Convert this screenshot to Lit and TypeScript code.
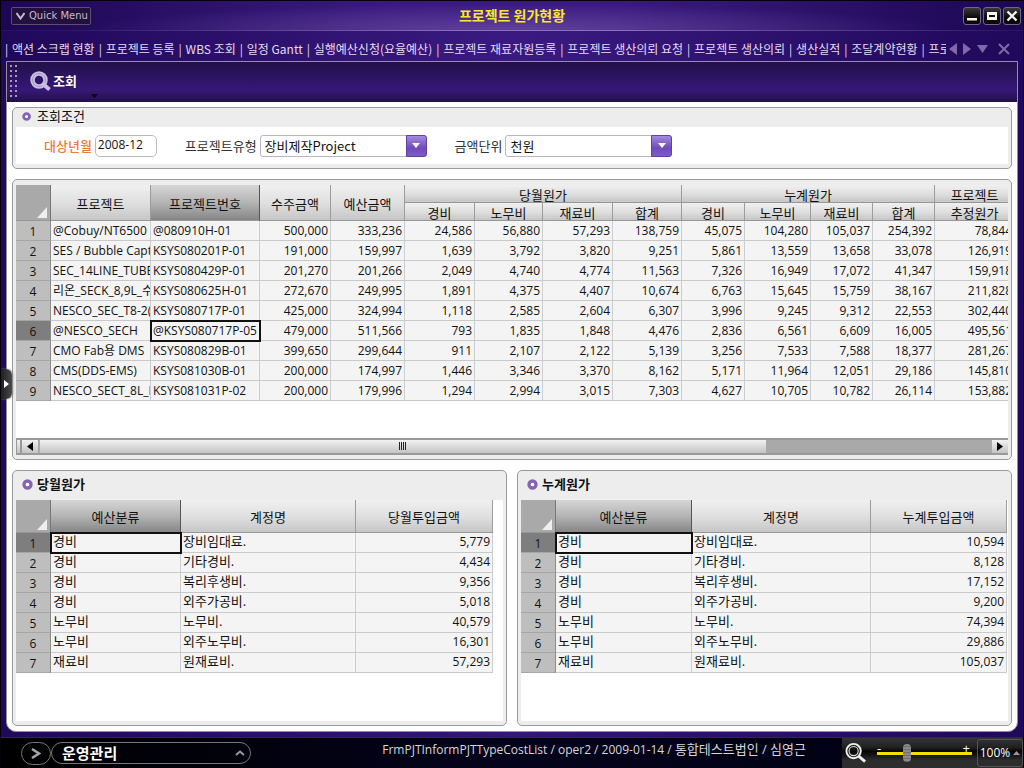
import { LitElement, html, css, svg } from "lit";
import { customElement, property } from "lit/decorators.js";
import { classMap } from "lit/directives/class-map.js";
import { styleMap } from "lit/directives/style-map.js";

interface HeadCell {
  text: string;
  rows?: number;
  cols?: number;
  active?: boolean;
}

interface GridData {
  label: string;
  widths: number[];
  head: HeadCell[][];
  rows: string[][];
  textCols: number;
  selected: [number, number];
}

const projectGrid: GridData = {
  label: "프로젝트 원가현황",
  widths: [35, 100, 109, 71, 74, 70, 68, 70, 69, 63, 66, 62, 62, 80],
  head: [
    [
      { text: "프로젝트", rows: 2 },
      { text: "프로젝트번호", rows: 2, active: true },
      { text: "수주금액", rows: 2 },
      { text: "예산금액", rows: 2 },
      { text: "당월원가", cols: 4 },
      { text: "누계원가", cols: 4 },
      { text: "프로젝트" },
    ],
    [
      { text: "경비" },
      { text: "노무비" },
      { text: "재료비" },
      { text: "합계" },
      { text: "경비" },
      { text: "노무비" },
      { text: "재료비" },
      { text: "합계" },
      { text: "추정원가" },
    ],
  ],
  textCols: 2,
  selected: [5, 1],
  rows: [
    ["@Cobuy/NT6500", "@080910H-01", "500,000", "333,236", "24,586", "56,880", "57,293", "138,759", "45,075", "104,280", "105,037", "254,392", "78,844"],
    ["SES / Bubble Capt", "KSYS080201P-01", "191,000", "159,997", "1,639", "3,792", "3,820", "9,251", "5,861", "13,559", "13,658", "33,078", "126,919"],
    ["SEC_14LINE_TUBE", "KSYS080429P-01", "201,270", "201,266", "2,049", "4,740", "4,774", "11,563", "7,326", "16,949", "17,072", "41,347", "159,918"],
    ["리온_SECK_8,9L_수", "KSYS080625H-01", "272,670", "249,995", "1,891", "4,375", "4,407", "10,674", "6,763", "15,645", "15,759", "38,167", "211,828"],
    ["NESCO_SEC_T8-2(", "KSYS080717P-01", "425,000", "324,994", "1,118", "2,585", "2,604", "6,307", "3,996", "9,245", "9,312", "22,553", "302,440"],
    ["@NESCO_SECH", "@KSYS080717P-05", "479,000", "511,566", "793", "1,835", "1,848", "4,476", "2,836", "6,561", "6,609", "16,005", "495,561"],
    ["CMO Fab용 DMS", "KSYS080829B-01", "399,650", "299,644", "911", "2,107", "2,122", "5,139", "3,256", "7,533", "7,588", "18,377", "281,267"],
    ["CMS(DDS-EMS)", "KSYS081030B-01", "200,000", "174,997", "1,446", "3,346", "3,370", "8,162", "5,171", "11,964", "12,051", "29,186", "145,810"],
    ["NESCO_SECT_8L_D", "KSYS081031P-02", "200,000", "179,996", "1,294", "2,994", "3,015", "7,303", "4,627", "10,705", "10,782", "26,114", "153,882"],
  ],
};

const accounts = [
  ["경비", "장비임대료."],
  ["경비", "기타경비."],
  ["경비", "복리후생비."],
  ["경비", "외주가공비."],
  ["노무비", "노무비."],
  ["노무비", "외주노무비."],
  ["재료비", "원재료비."],
];

const costGrid = (label: string, amountHead: string, widths: number[], amounts: string[]): GridData => ({
  label,
  widths,
  head: [[{ text: "예산분류", active: true }, { text: "계정명" }, { text: amountHead }]],
  textCols: 2,
  selected: [0, 0],
  rows: accounts.map((a, i) => [...a, amounts[i]]),
});

const monthGrid = costGrid("당월원가", "당월투입금액", [35, 130, 175, 137],
  ["5,779", "4,434", "9,356", "5,018", "40,579", "16,301", "57,293"]);
const totalGrid = costGrid("누계원가", "누계투입금액", [35, 136, 179, 136],
  ["10,594", "8,128", "17,152", "9,200", "74,394", "29,886", "105,037"]);

const tabs = [
  "액션 스크랩 현황", "프로젝트 등록", "WBS 조회", "일정 Gantt", "실행예산신청(요율예산)",
  "프로젝트 재료자원등록", "프로젝트 생산의뢰 요청", "프로젝트 생산의뢰", "생산실적",
  "조달계약현황", "프로젝트 원가현황",
];

@customElement("data-grid")
export class DataGrid extends LitElement {
  @property({ attribute: false }) data!: GridData;

  static styles = css`
    :host { display: block; overflow: hidden; }
    table {
      table-layout: fixed;
      border-collapse: separate;
      border-spacing: 0;
      color: #111;
    }
    th, td {
      box-sizing: border-box;
      padding: 0 2px;
      overflow: hidden;
      white-space: nowrap;
      font-weight: 400;
    }
    thead th {
      height: 33px;
      padding-top: 3px;
      font-size: 13px;
      line-height: 14px;
      text-align: center;
      background: linear-gradient(#f0f0f0, #dedede 55%, #c6c6c6);
      border-right: 1px solid #9c9c9c;
      border-bottom: 1px solid #979797;
    }
    .double th { height: 18px; }
    thead th.active {
      background: linear-gradient(#d6d6d6, #b4b4b4 50%, #868686);
      border-right-color: #555;
    }
    thead th.corner {
      padding: 0 3px 2px 0;
      vertical-align: bottom;
      text-align: right;
      background: #a9a9a9;
      border-right-color: #777;
    }
    .corner svg { display: inline-block; width: 10px; height: 11px; vertical-align: bottom; }
    tbody th {
      height: 20px;
      padding-top: 3px;
      font-size: 12px;
      line-height: 16px;
      background: #bebebe;
      border-right: 1px solid #8c8c8c;
      border-bottom: 1px solid #a6a6a6;
    }
    tbody th.current { background: #7e7e7e; }
    td {
      height: 20px;
      font-size: 12px;
      line-height: 18px;
      text-align: right;
      background: #f4f4f4;
      border-right: 1px solid #c9ced3;
      border-bottom: 1px solid #c9c9c9;
    }
    td.text { text-align: left; }
    td.korean { padding-bottom: 2px; font-size: 13px; line-height: 17px; }
    td.selected { outline: 2px solid #111; outline-offset: -1px; }
  `;

  render() {
    const d = this.data;
    const total = d.widths.reduce((a, b) => a + b, 0);
    return html`
      <table aria-label=${d.label} style=${styleMap({ width: `${total}px` })}>
        <colgroup>
          ${d.widths.map((w) => html`<col style=${styleMap({ width: `${w}px` })} />`)}
        </colgroup>
        <thead class=${classMap({ double: d.head.length > 1 })}>
          ${d.head.map((row, i) => html`<tr>
            ${i === 0
              ? html`<th class="corner" rowspan=${d.head.length}>
                  <svg viewBox="0 0 10 11" aria-hidden="true"><path d="M10 0v11H0z" fill="#efefef" /></svg>
                </th>`
              : ""}
            ${row.map((c) => html`<th
              class=${classMap({ active: !!c.active })}
              rowspan=${c.rows ?? 1}
              colspan=${c.cols ?? 1}
            >${c.text}</th>`)}
          </tr>`)}
        </thead>
        <tbody>
          ${d.rows.map((row, r) => html`<tr>
            <th scope="row" class=${classMap({ current: d.selected[0] === r })}>${r + 1}</th>
            ${row.map((v, c) => html`<td class=${classMap({
              text: c < d.textCols,
              korean: /^[가-힣]+\.?$/.test(v),
              selected: d.selected[0] === r && d.selected[1] === c,
            })}>${v}</td>`)}
          </tr>`)}
        </tbody>
      </table>
    `;
  }
}

const ring = svg`<circle cx="5" cy="5" r="3.2" fill="#fff" stroke="#8563b4" stroke-width="3" />`;

@customElement("app-root")
export class AppRoot extends LitElement {
  static styles = css`
    :host {
      position: relative;
      display: flex;
      flex-direction: column;
      box-sizing: border-box;
      height: 100vh;
      min-height: 640px;
      overflow: hidden;
      border: 1px solid #05020c;
      border-bottom: 0;
      background: linear-gradient(90deg, #20085a, #331675 50%, #20085a);
      color: #111;
      font-family: "Open Sans", "Noto Sans CJK KR", sans-serif;
      font-size: 13px;
      line-height: 18px;
    }
    * { box-sizing: border-box; }
    button, input, select { font: inherit; color: inherit; margin: 0; }
    button { padding: 0; border: 0; background: none; cursor: pointer; }
    a { color: inherit; text-decoration: none; }
    svg { display: block; flex: none; }
    h1, h2 { margin: 0; font-weight: 700; }

    .titlebar {
      display: grid;
      grid-template-columns: 1fr auto 1fr;
      align-items: center;
      flex: none;
      height: 30px;
      padding: 0 2px;
      border-bottom: 1px solid #6b5299;
      border-image: linear-gradient(90deg, #2b1266 5%, #8a72b2 45%, #8a72b2 60%, #2b1266) 1;
      background:
        radial-gradient(ellipse 42% 90% at 50% 100%, rgba(120, 90, 170, .6), transparent),
        linear-gradient(90deg, #1d0753, #3a1a80 38%, #3a1a80 60%, #1d0753);
    }
    .quick {
      display: flex;
      align-items: center;
      gap: 4px;
      height: 18px;
      width: 80px;
      margin-left: 8px;
      padding-left: 4px;
      justify-self: start;
      border: 1px solid #5c5070;
      border-radius: 2px;
      background: #24103f;
      color: #c2bccd;
      font-family: "DejaVu Sans", sans-serif;
      font-size: 10px;
      white-space: nowrap;
    }
    .title { color: #fbe72c; font-size: 14px; line-height: 20px; padding-bottom: 2px; font-family: "Noto Sans CJK KR", sans-serif; }
    .winbtns { display: flex; gap: 2px; justify-self: end; }
    .winbtns button {
      display: grid;
      place-items: center;
      width: 18px;
      height: 18px;
      border: 1px solid #6d6780;
      border-radius: 3px;
      background: linear-gradient(#3a3a3a, #0a0a0a 60%);
    }

    .tabbar {
      display: flex;
      align-items: center;
      flex: none;
      height: 30px;
      padding: 6px 13px 0 4px;
      color: #e4dcf2;
      background: linear-gradient(90deg, #20085a, #3a1a80 50%, #20085a);
    }
    .tabs {
      display: flex;
      flex: 1;
      min-width: 0;
      overflow: hidden;
      font-family: "Noto Sans CJK KR", sans-serif;
      font-size: 12px;
      white-space: nowrap;
    }
    .tabs a::before { content: "|"; display: inline-block; width: 7px; }
    .tabs a { flex: none; padding-right: 4px; }
    .tabnav { display: flex; align-items: center; gap: 6px; padding-left: 3px; }
    .tabnav .x { margin-left: 4px; }

    .frame {
      display: flex;
      flex-direction: column;
      flex: 1;
      min-height: 0;
      margin: 0 5px 5px;
      border: 1px solid #98918c;
      border-radius: 0 0 10px 10px;
      background: #fff;
      overflow: hidden;
    }
    .toolbar {
      display: flex;
      align-items: center;
      flex: none;
      height: 40px;
      padding: 0 3px 2px;
      background: linear-gradient(#231048, #341672 62%, #371876 70%, #22104a);
      color: #fff;
    }
    .grip {
      width: 8px;
      height: 32px;
      background: radial-gradient(circle at 1px 1px, #a79cc0 1px, transparent 1px) 0 0 / 5px 5px;
    }
    .search { display: flex; align-items: center; gap: 2px; margin-left: 12px; font-weight: 700; }
    .caret { align-self: flex-end; margin: 0 0 2px 14px; }

    .content {
      display: grid;
      grid-template-rows: auto minmax(0, 280fr) minmax(0, 256fr);
      flex: 1;
      gap: 10px;
      min-height: 0;
      padding: 5px;
    }
    .panel {
      display: flex;
      flex-direction: column;
      min-width: 0;
      min-height: 0;
      padding: 0 3px 4px;
      border: 1px solid #9a9a9a;
      border-radius: 5px;
      background: #ededed;
    }
    .head { display: flex; align-items: center; gap: 4px; flex: none; height: 29px; padding: 0 0 2px 6px; }
    .head h2 { font-size: 13px; }
    .cond .head { height: 19px; padding-bottom: 3px; }
    .cond h2 { font-weight: 400; }
    .fields { display: flex; align-items: center; height: 37px; padding-left: 28px; background: #fff; }
    .fields label { color: #333; white-space: nowrap; margin-right: 3px; }
    .fields label.must { color: #ee7a31; font-weight: 500; font-family: "Noto Sans CJK KR", sans-serif; }
    .fields input {
      width: 62px;
      height: 22px;
      margin-right: 28px;
      padding: 0 2px 2px;
      border: 1px solid #bbb;
      border-radius: 5px;
      background: #fff;
      font-size: 12px;
    }
    .combo { display: grid; width: 167px; margin-right: 28px; }
    .combo select, .combo .drop { grid-area: 1 / 1; }
    .combo select {
      appearance: none;
      height: 22px;
      padding: 1px 24px 0 4px;
      border: 1px solid #b9b5c4;
      border-radius: 3px;
      background: #fff;
      font-family: "Noto Sans CJK KR", sans-serif;
    }
    .drop {
      display: grid;
      place-items: center;
      justify-self: end;
      width: 21px;
      height: 22px;
      border: 1px solid #5e41a0;
      border-radius: 0 3px 3px 0;
      background: linear-gradient(#a48ae0, #6f4bba 60%, #7d5cc6);
      pointer-events: none;
    }

    .main { padding-top: 5px; }
    .sheet { flex: 1; min-height: 0; background: #fff; }
    .pair { display: grid; grid-template-columns: minmax(0, 1fr) minmax(0, 1fr); gap: 10px; min-height: 0; }

    .scroll {
      display: flex;
      flex: none;
      height: 17px;
      border: solid #9a9a9a;
      border-width: 2px 0;
      background: #a9a9a9;
    }
    .scroll button, .thumb { display: grid; place-items: center; background: linear-gradient(#f2f2f2, #c4c4c4); }
    .scroll button { width: 16px; }
    .scroll .split { width: 6px; border-right: 2px solid #999; border-left: 1px solid #999; }
    .thumb { flex: 726 1 0; border-left: 2px solid #aaa; }
    .track { flex: 226 1 0; }

    .status {
      display: flex;
      align-items: stretch;
      flex: none;
      height: 31px;
      border-top: 1px solid #33264d;
      background: linear-gradient(90deg, #000, #04031c 50%, #000010);
      color: #d6d6dc;
    }
    .go {
      display: grid;
      place-items: center;
      align-self: center;
      flex: none;
      width: 30px;
      height: 23px;
      margin-left: 20px;
      border: 1px solid #777;
      border-radius: 12px;
    }
    .module {
      display: flex;
      align-items: center;
      justify-content: space-between;
      align-self: center;
      flex: none;
      width: 200px;
      height: 22px;
      padding: 0 5px 0 10px;
      border: 1px solid #777;
      border-radius: 11px;
      color: #fff;
      font-size: 15px;
      font-weight: 700;
    }
    .path { flex: 1; min-width: 0; padding: 2px 36px 0 0; text-align: right; font-size: 12px; white-space: nowrap; }
    .who { font-size: 13px; }
    .zoom {
      display: flex;
      align-items: center;
      flex: none;
      width: 181px;
      padding-left: 3px;
      background: linear-gradient(#343434, #222 30%, #060606 45%, #2d2d2d 75%);
    }
    .range { display: grid; flex: none; width: 95px; margin: 0 5px 0 10px; }
    .signs, .range input { grid-area: 1 / 1; }
    .signs { display: flex; justify-content: space-between; height: 22px; line-height: 12px; color: #fff; padding-right: 2px; }
    .range input { appearance: none; width: 95px; height: 22px; background: transparent; }
    .range input::-webkit-slider-runnable-track { height: 3px; background: #f6dc00; }
    .range input::-webkit-slider-thumb {
      appearance: none;
      width: 8px;
      height: 18px;
      margin-top: -8px;
      border-radius: 4px;
      background: repeating-linear-gradient(#8b8b8b 0 2px, #6f6f6f 2px 3px);
    }
    .pct {
      display: flex;
      align-items: center;
      justify-content: center;
      gap: 3px;
      flex: 1;
      height: 28px;
      border: 1px solid #555;
      border-radius: 3px;
      color: #fff;
      font-size: 12px;
    }

    /* Drawer handle floats over the frame's left edge. */
    .drawer {
      position: absolute;
      left: -1px;
      top: calc(50% - 16px);
      display: grid;
      place-items: center;
      width: 12px;
      height: 30px;
      border-radius: 0 6px 6px 0;
      background: linear-gradient(90deg, #1b1b1b, #4a4a4a);
      box-shadow: 1px 0 2px #888;
    }
  `;

  private panel(d: GridData) {
    return html`<section class="panel">
      <div class="head">
        <svg width="11" height="11" viewBox="0 0 10 10" aria-hidden="true">${ring}</svg>
        <h2>${d.label}</h2>
      </div>
      <data-grid class="sheet" .data=${d}></data-grid>
    </section>`;
  }

  private drop() {
    return html`<span class="drop" aria-hidden="true">
      <svg width="8" height="5" viewBox="0 0 8 5"><path d="M0 0h8L4 5z" fill="#fff" /></svg>
    </span>`;
  }

  render() {
    return html`
      <header class="titlebar">
        <button class="quick">
          <svg width="9" height="8" viewBox="0 0 9 8"><path d="M0.500 1l4 5.500L8.500 1" fill="none" stroke="#c2bccd" stroke-width="2" /></svg>
          Quick Menu
        </button>
        <h1 class="title">프로젝트 원가현황</h1>
        <div class="winbtns">
          <button aria-label="최소화"><svg width="12" height="12" viewBox="0 0 12 12"><path d="M1 8h10v2.500H1z" fill="#f5f5ea" /></svg></button>
          <button aria-label="최대화"><svg width="12" height="12" viewBox="0 0 12 12"><path d="M1 2h10v8H1z M3 5v2h6V5z" fill="#f5f5ea" fill-rule="evenodd" /></svg></button>
          <button aria-label="닫기"><svg width="12" height="12" viewBox="0 0 12 12"><path d="M1.500 1.500l9 9M10.500 1.500l-9 9" stroke="#f5f5ea" stroke-width="2.400" /></svg></button>
        </div>
      </header>

      <nav class="tabbar">
        <div class="tabs">${tabs.map((t) => html`<a href="#">${t}</a>`)}</div>
        <div class="tabnav">
          <button aria-label="이전"><svg width="8" height="12" viewBox="0 0 9 12" preserveAspectRatio="none"><path d="M9 0v12L0 6z" fill="#7f69a8" /></svg></button>
          <button aria-label="다음"><svg width="8" height="12" viewBox="0 0 9 12" preserveAspectRatio="none"><path d="M0 0v12l9-6z" fill="#7f69a8" /></svg></button>
          <button aria-label="목록"><svg width="11" height="8" viewBox="0 0 12 9" preserveAspectRatio="none"><path d="M0 0h12L6 9z" fill="#7f69a8" /></svg></button>
          <button class="x" aria-label="탭 닫기"><svg width="12" height="12" viewBox="0 0 12 12"><path d="M1 1l10 10M11 1L1 11" stroke="#7f69a8" stroke-width="2" /></svg></button>
        </div>
      </nav>

      <main class="frame">
        <div class="toolbar">
          <span class="grip"></span>
          <button class="search">
            <svg width="21" height="20" viewBox="0 0 21 20">
              <circle cx="9" cy="9" r="6.500" fill="none" stroke="#c9bfe0" stroke-width="4.500" />
              <circle cx="9" cy="9" r="6.500" fill="none" stroke="#a294c8" stroke-width="1" />
              <path d="M13 13l6.500 5.500" stroke="#c9bfe0" stroke-width="4" />
            </svg>
            조회
          </button>
          <svg class="caret" width="7" height="4" viewBox="0 0 7 4" aria-hidden="true"><path d="M0 0h7L3.500 4z" fill="#0b0418" /></svg>
        </div>

        <div class="content">
          <section class="panel cond">
            <div class="head">
              <svg width="11" height="11" viewBox="0 0 12 12" aria-hidden="true"><g transform="translate(0 1)">${ring}</g></svg>
              <h2>조회조건</h2>
            </div>
            <form class="fields">
              <label class="must" for="month">대상년월</label>
              <input id="month" type="text" value="2008-12" />
              <label for="kind">프로젝트유형</label>
              <span class="combo">
                <select id="kind"><option>장비제작Project</option></select>
                ${this.drop()}
              </span>
              <label for="unit">금액단위</label>
              <span class="combo">
                <select id="unit"><option>천원</option></select>
                ${this.drop()}
              </span>
            </form>
          </section>

          <section class="panel main">
            <data-grid class="sheet" .data=${projectGrid}></data-grid>
            <div class="scroll">
              <button class="split" aria-label="분할"></button>
              <button aria-label="왼쪽"><svg width="6" height="9" viewBox="0 0 6 9"><path d="M6 0v9L0 4.500z" fill="#000" /></svg></button>
              <div class="thumb"><svg width="8" height="8" viewBox="0 0 8 8" aria-hidden="true"><path d="M.5 0v8M2.500 0v8M4.500 0v8M6.500 0v8" stroke="#222" /></svg></div>
              <div class="track"></div>
              <button aria-label="오른쪽"><svg width="6" height="9" viewBox="0 0 6 9"><path d="M0 0v9l6-4.500z" fill="#000" /></svg></button>
            </div>
          </section>

          <div class="pair">${this.panel(monthGrid)}${this.panel(totalGrid)}</div>
        </div>
      </main>

      <footer class="status">
        <button class="go" aria-label="이동"><svg width="10" height="11" viewBox="0 0 10 11"><path d="M1 1l7 4.500L1 10" fill="none" stroke="#a5a5a5" stroke-width="2.500" /></svg></button>
        <button class="module">
          운영관리
          <svg width="10" height="6" viewBox="0 0 10 6"><path d="M1 5l4-3.500L9 5" fill="none" stroke="#999" stroke-width="2" /></svg>
        </button>
        <span class="path">FrmPJTInformPJTTypeCostList / oper2 / 2009-01-14 / <span class="who">통합테스트법인 / 심영근</span></span>
        <div class="zoom">
          <svg width="22" height="22" viewBox="0 0 23 22" aria-hidden="true">
            <circle cx="9" cy="9" r="7.500" fill="none" stroke="#eee" stroke-width="2" />
            <circle cx="9" cy="9" r="4.800" fill="none" stroke="#ddd" stroke-width="1.200" />
            <path d="M14 14l7 6" stroke="#eee" stroke-width="3" />
          </svg>
          <div class="range">
            <div class="signs"><span>-</span><span>+</span></div>
            <input type="range" aria-label="확대" min="0" max="100" value="30" />
          </div>
          <button class="pct">100%
            <svg width="7" height="4" viewBox="0 0 7 4"><path d="M0 4h7L3.500 0z" fill="#999" /></svg>
          </button>
        </div>
      </footer>

      <button class="drawer" aria-label="메뉴 열기"><svg width="5" height="8" viewBox="0 0 5 8"><path d="M0 0v8l5-4z" fill="#fff" /></svg></button>
    `;
  }
}
